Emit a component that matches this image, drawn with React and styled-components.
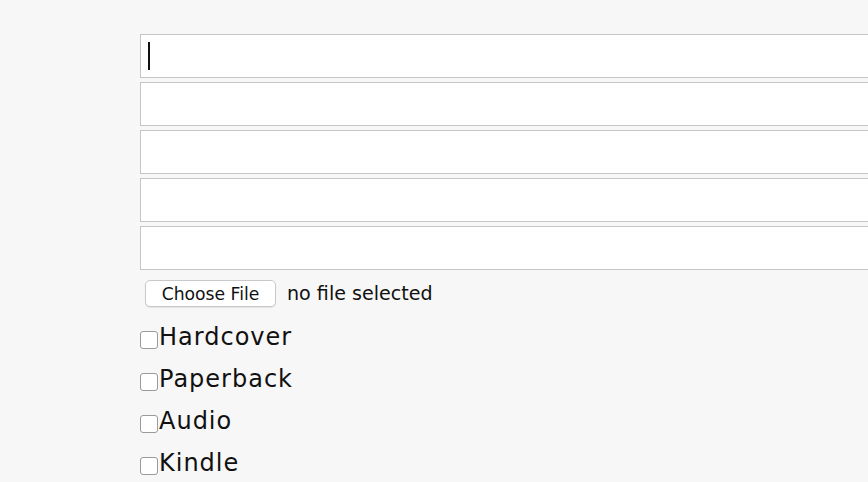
import styled, { createGlobalStyle } from "styled-components";

const GlobalStyle = createGlobalStyle`
  html, body {
    margin: 0;
    padding: 0;
    background: #f7f7f7;
    overflow: hidden;
  }
`;

const Page = styled.div`
  width: 100vw;
  overflow: hidden;
`;

const Form = styled.form`
  display: flex;
  flex-direction: column;
  padding: 34px 0 0 140px;
  font-family: "DejaVu Sans", sans-serif;
  color: #111;
`;

const FieldWrap = styled.div`
  position: relative;
  margin: 0 0 4px;
`;

const TextField = styled.input`
  display: block;
  box-sizing: border-box;
  width: 820px;
  height: 44px;
  margin: 0;
  padding: 0 8px;
  border: 1px solid #c4c4c4;
  border-radius: 0;
  background: #fff;
  font-size: 24px;
  font-family: inherit;
  outline: none;
`;

// text cursor sitting in the active field
const Caret = styled.span`
  position: absolute;
  left: 8px;
  top: 8px;
  width: 2px;
  height: 28px;
  background: #111;
`;

const FileRow = styled.div`
  display: flex;
  align-items: center;
  gap: 11px;
  margin: 6px 0 9px 5px;
`;

const FileButton = styled.label`
  display: flex;
  align-items: center;
  justify-content: center;
  box-sizing: border-box;
  width: 131px;
  height: 27px;
  border: 1px solid #c9c9c9;
  border-radius: 5px;
  background: #fff;
  box-shadow: 0 1px 1px rgba(0, 0, 0, 0.08);
  font-size: 17.2px;
  color: #111;
`;

const HiddenFile = styled.input`
  display: none;
`;

const FileName = styled.span`
  font-size: 19.1px;
  color: #111;
`;

const Option = styled.label`
  display: flex;
  align-items: center;
  height: 42px;
  font-size: 24px;
  letter-spacing: 1px;
`;

const Box = styled.input`
  appearance: none;
  box-sizing: border-box;
  width: 18px;
  height: 18px;
  margin: 6px 1px 0 0;
  border: 1px solid #9a9a9a;
  border-radius: 3px;
  background: #fff;
`;

const formats = ["Hardcover", "Paperback", "Audio", "Kindle"];

const App = () => {
  return (
    <Page>
      <GlobalStyle />
      <Form onSubmit={(e) => e.preventDefault()}>
        <FieldWrap>
          <TextField type="text" />
          <Caret />
        </FieldWrap>
        {[1, 2, 3, 4].map((n) => (
          <FieldWrap key={n}>
            <TextField type="text" />
          </FieldWrap>
        ))}
        <FileRow>
          <FileButton>
            Choose File
            <HiddenFile type="file" />
          </FileButton>
          <FileName>no file selected</FileName>
        </FileRow>
        {formats.map((item) => (
          <Option key={item}>
            <Box type="checkbox" />
            {item}
          </Option>
        ))}
      </Form>
    </Page>
  );
};

export default App;
